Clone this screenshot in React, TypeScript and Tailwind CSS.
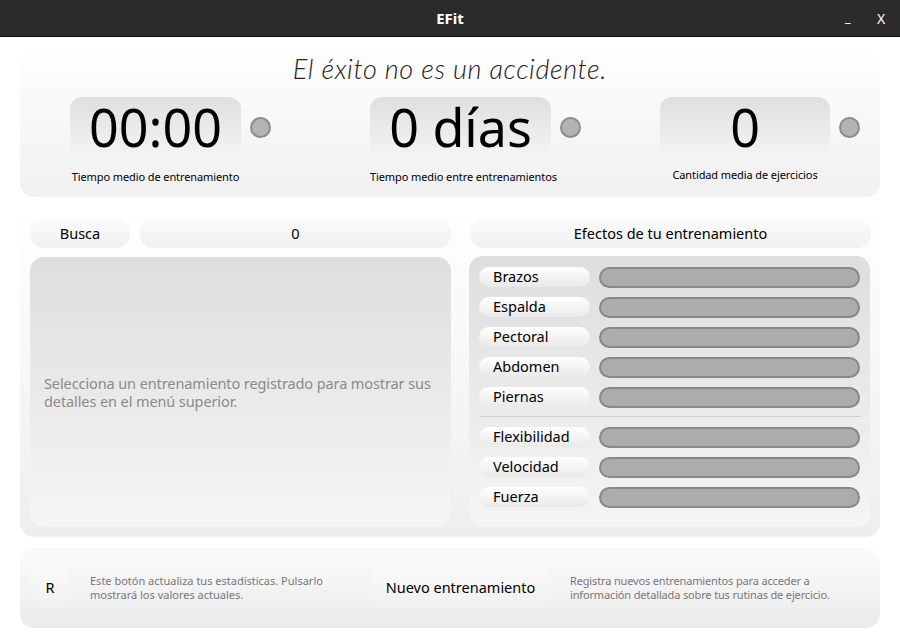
import React from 'react';

const font = { fontFamily: '"Noto Sans", "Open Sans", sans-serif' };

const StatBox: React.FC<{ value: string; label: string; boxW?: string; labelClass?: string }> = ({
  value,
  label,
  boxW,
  labelClass,
}) => (
  <div className="flex flex-col">
    <div className="flex items-center gap-[9px]">
      <div
        className={`${boxW ?? 'w-[171px]'} h-[60px] rounded-[12px] bg-gradient-to-b from-[#dfdfdf] to-[#f4f4f4] flex items-center justify-center text-[52px] leading-none text-black`}
      >
        {value}
      </div>
      <div className="w-[21px] h-[21px] rounded-full bg-[#b3b3b3] border-2 border-[#8c8c8c]"></div>
    </div>
    <div
      className={`${boxW ?? 'w-[171px]'} text-center text-[11px] tracking-[-0.1px] text-black whitespace-nowrap ${labelClass ?? 'mt-[12px]'}`}
    >
      {label}
    </div>
  </div>
);

const effects = ['Brazos', 'Espalda', 'Pectoral', 'Abdomen', 'Piernas'];
const skills = ['Flexibilidad', 'Velocidad', 'Fuerza'];

const EffectRow: React.FC<{ name: string }> = ({ name }) => (
  <div className="flex items-center gap-[9px] h-[20px]">
    <div className="w-[111px] h-[20px] rounded-[10px] bg-gradient-to-b from-[#ffffff] to-[#e9e9e9] flex items-center pl-[14px] text-[14.5px] text-black">
      {name}
    </div>
    <div className="flex-1 h-[21px] rounded-full bg-[#acacac] border-2 border-[#888888]"></div>
  </div>
);

export default function App() {
  return (
    <div className="w-[900px] h-[637px] bg-white flex flex-col overflow-hidden" style={font}>
      <div className="h-[37px] bg-[#2b2b2b] border-b border-[#111] flex items-center justify-center relative">
        <span className="text-white font-bold text-[15px]">EFit</span>
        <span className="absolute left-[845px] top-[8px] text-white text-[13px]">_</span>
        <span className="absolute left-[877px] top-[8px] text-white text-[14px]">X</span>
      </div>

      <div className="mx-[20px] mt-[8px] h-[152px] rounded-[14px] bg-gradient-to-b from-[#ffffff] to-[#f0f0f0] flex flex-col">
        <div
          className="text-center text-[27px] italic font-light tracking-[0.6px] text-[#222] mt-[6px] leading-[35px]"
          style={{ fontFamily: 'Lato, "Noto Sans", sans-serif' }}
        >
          El éxito no es un accidente.
        </div>
        <div className="flex mt-[11px] pl-[50px]">
          <StatBox value="00:00" label="Tiempo medio de entrenamiento" />
          <div className="ml-[99px]">
            <StatBox value="0 días" label="Tiempo medio entre entrenamientos" boxW="w-[181px]" />
          </div>
          <div className="ml-[79px]">
            <StatBox value="0" label="Cantidad media de ejercicios" boxW="w-[170px]" labelClass="mt-[10px]" />
          </div>
        </div>
      </div>

      <div className="mx-[20px] mt-[8px] h-[332px] rounded-[14px] bg-gradient-to-b from-[#ffffff] to-[#eeeeee] flex gap-[18px] px-[10px] pt-[14px] pb-[10px]">
        <div className="w-[421px] flex flex-col gap-[9px]">
          <div className="flex gap-[10px] h-[29px]">
            <div className="w-[100px] rounded-[14px] bg-gradient-to-b from-[#fbfbfb] to-[#f0f0f0] flex items-center justify-center text-[14.5px] text-black">
              Busca
            </div>
            <div className="flex-1 rounded-[14px] bg-gradient-to-b from-[#fbfbfb] to-[#f0f0f0] flex items-center justify-center text-[14.5px] text-black">
              0
            </div>
          </div>
          <div className="flex-1 rounded-[14px] bg-gradient-to-b from-[#dedede] to-[#f5f5f5] flex items-center px-[14px]">
            <p className="text-[14.5px] tracking-[-0.1px] text-[#8a8a8a] leading-[18px]">
              Selecciona un entrenamiento registrado para mostrar sus detalles en el menú superior.
            </p>
          </div>
        </div>
        <div className="flex-1 flex flex-col gap-[8px]">
          <div className="h-[29px] ml-[1px] mr-[-1px] rounded-[14px] bg-gradient-to-b from-[#fbfbfb] to-[#f0f0f0] flex items-center justify-center text-[14.5px] text-black">
            Efectos de tu entrenamiento
          </div>
          <div className="flex-1 rounded-[14px] bg-gradient-to-b from-[#dedede] to-[#f5f5f5] px-[10px] pt-[11px] flex flex-col">
            <div className="flex flex-col gap-[10px]">
              {effects.map((e) => (
                <EffectRow key={e} name={e} />
              ))}
            </div>
            <div className="h-px bg-[#cfcfcf] mt-[9px] mb-[10px] mr-[-1px]"></div>
            <div className="flex flex-col gap-[10px]">
              {skills.map((e) => (
                <EffectRow key={e} name={e} />
              ))}
            </div>
          </div>
        </div>
      </div>

      <div className="mx-[20px] mt-[11px] h-[80px] rounded-[14px] bg-gradient-to-b from-[#fbfbfb] to-[#ebebeb] flex items-center px-[10px]">
        <div className="w-[40px] h-[40px] rounded-[12px] bg-gradient-to-b from-[#fafafa] to-[#f0f0f0] flex items-center justify-center text-[14.5px] text-black">
          R
        </div>
        <p className="ml-[20px] w-[260px] text-[11px] leading-[14px] text-[#777]">
          Este botón actualiza tus estadísticas. Pulsarlo mostrará los valores actuales.
        </p>
        <div className="ml-[20px] w-[181px] h-[40px] rounded-[12px] bg-gradient-to-b from-[#fafafa] to-[#f0f0f0] flex items-center justify-center text-[14.5px] text-black">
          Nuevo entrenamiento
        </div>
        <p className="ml-[19px] w-[275px] text-[11px] tracking-[-0.15px] leading-[14px] text-[#777]">
          Registra nuevos entrenamientos para acceder a información detallada sobre tus rutinas de ejercicio.
        </p>
      </div>
    </div>
  );
}
